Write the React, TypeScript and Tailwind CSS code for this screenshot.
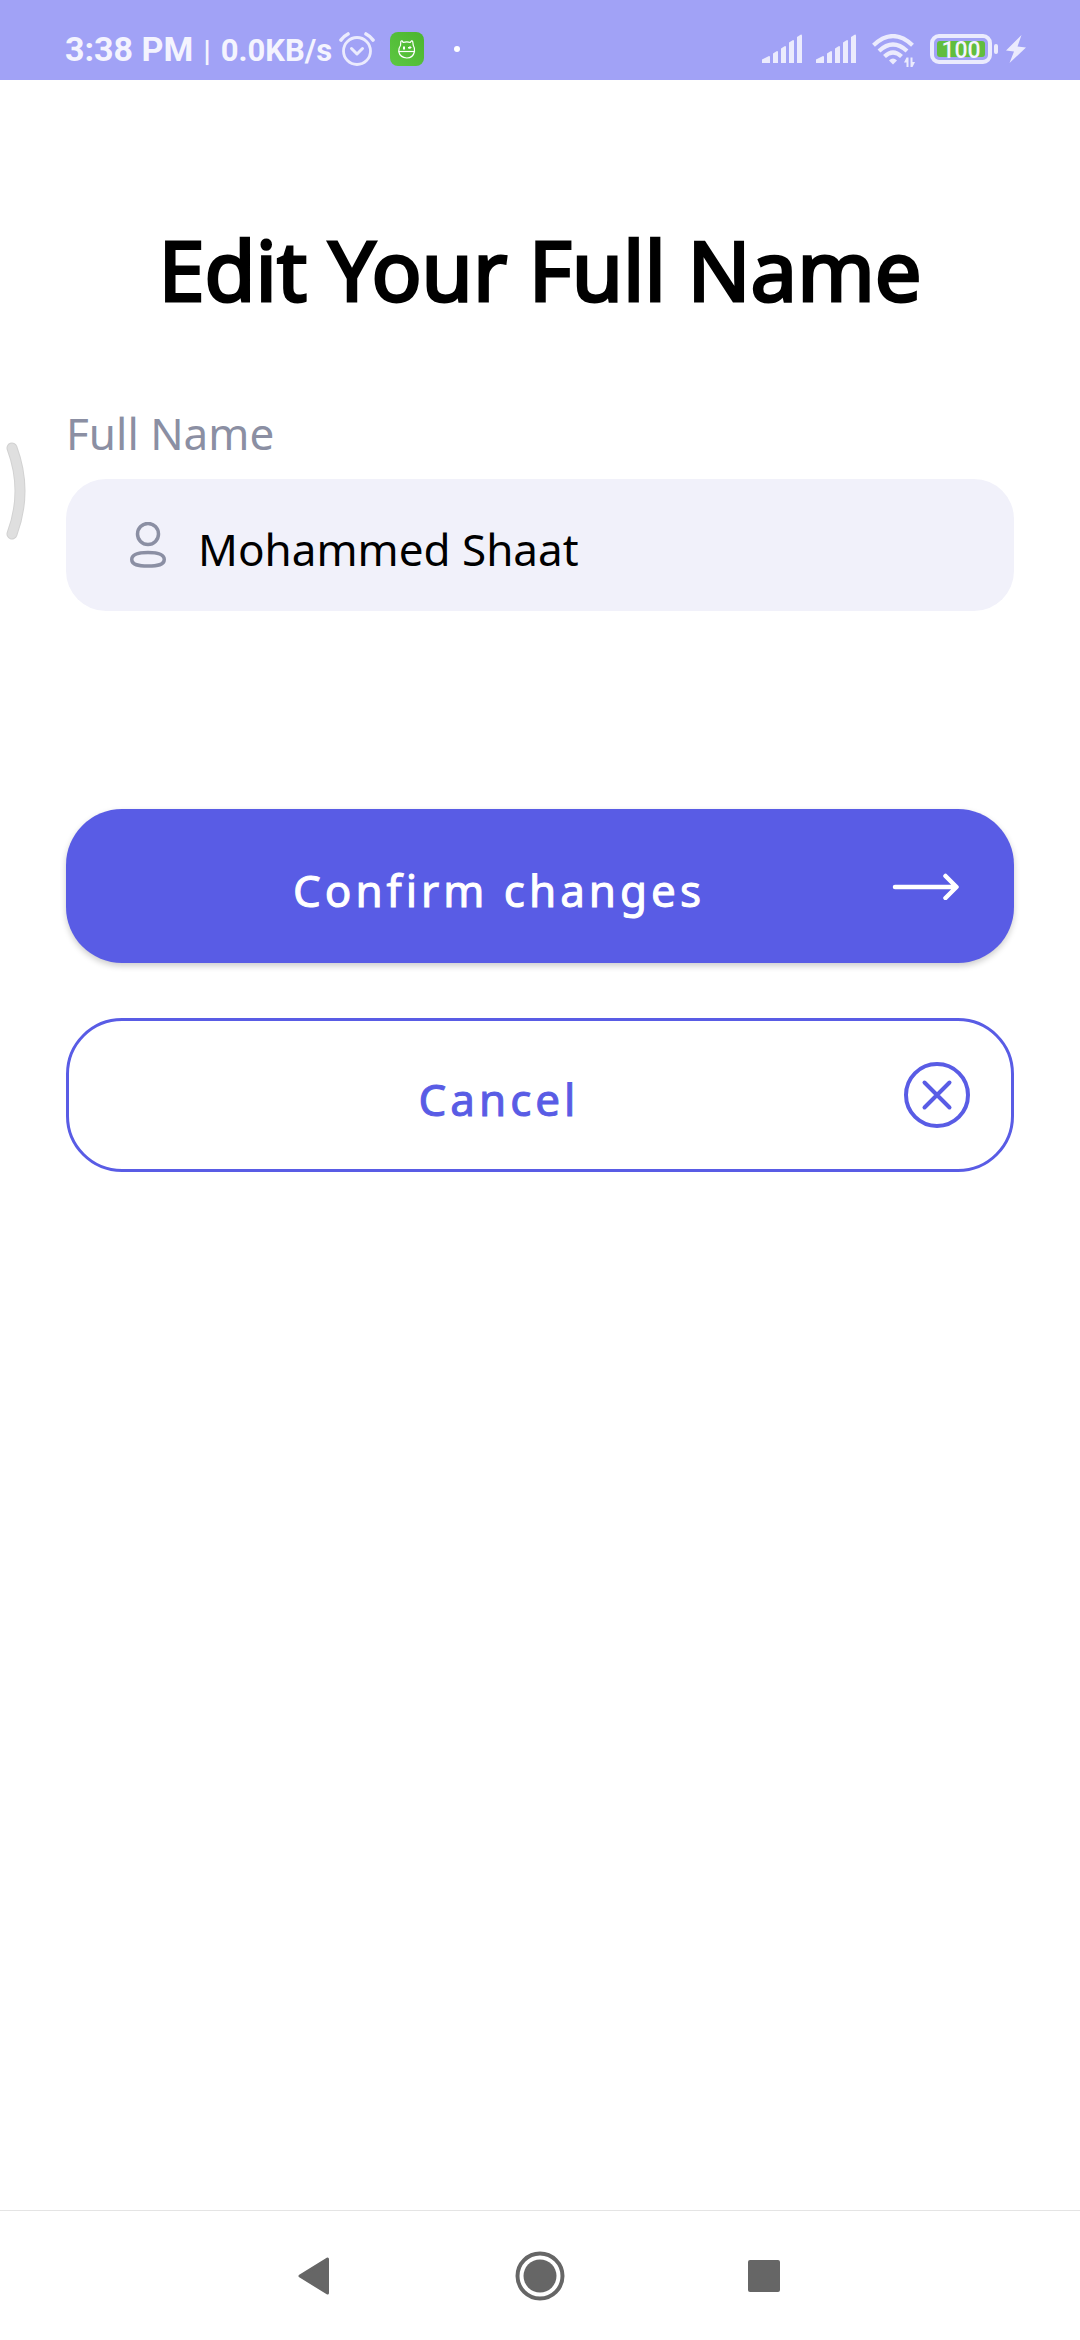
import { useState } from "react";

function SignalIcon() {
  return (
    <svg width="40" height="30" viewBox="0 0 40 30" fill="#ebebfd" aria-hidden="true">
      <path d="M0 25.5 7 22a1 1 0 0 1 1 1v6H0z" />
      <path d="M11 19.500l4-2.500a1 1 0 0 1 1 1v11h-5z" />
      <path d="M19 14.500l4-2.500a1 1 0 0 1 1 1v16h-5z" />
      <path d="M27 8.500l4-2.500a1 1 0 0 1 1 1v22h-5z" />
      <path d="M35 3l4-2.500a1 1 0 0 1 1 1V29h-5z" />
    </svg>
  );
}

function AlarmIcon() {
  return (
    <svg width="36" height="36" viewBox="0 0 36 36" fill="none" stroke="#ebebfd" strokeLinecap="round" aria-hidden="true">
      <circle cx="18" cy="20" r="13.500" strokeWidth="2.800" />
      <path d="M12.500 17.500l5.500 5.500 5.500-5.500" strokeWidth="3" strokeLinejoin="round" />
      <path d="M2 9A19 19 0 0 1 9 3M27 3A19 19 0 0 1 34 9" strokeWidth="3.600" />
    </svg>
  );
}

function MascotIcon() {
  return (
    <svg width="34" height="34" viewBox="0 0 34 34" aria-hidden="true">
      <defs>
        <linearGradient id="mascot" x1="1" y1="0" x2="0" y2="1">
          <stop offset="0" stopColor="#4cb52f" />
          <stop offset="1" stopColor="#5cc742" />
        </linearGradient>
      </defs>
      <rect width="34" height="34" rx="8" fill="url(#mascot)" />
      <g fill="none" stroke="#fff" strokeWidth="1.200" strokeLinejoin="round">
        <path d="M10.500 13.500 10.800 9.500Q12 7.800 13.200 10.500Q17 9.300 20.200 10.500Q21.800 7.800 22.700 9.500L23.300 13.500Q25 16 24.500 19.500Q23 26 16.800 26Q10 25.500 8.700 19.500Q8.500 16 10.500 13.500Z" />
        <path d="M9 19.500h15.500" />
      </g>
      <path d="M13 14.500h2v3h-2zM18 15h1.500v1.500H18zM19.500 14h1v3h-1zM20.500 15h1v1h-1z" fill="#fff" />
    </svg>
  );
}

function WifiIcon() {
  return (
    <svg width="43" height="34" viewBox="0 0 43 34" fill="none" stroke="#ebebfd" aria-hidden="true">
      <path d="M1.500 11.200Q21 -7 40.500 11.200" strokeWidth="4.200" />
      <path d="M7 17Q21 4 35 17" strokeWidth="4.200" />
      <path d="M12.500 22.500Q21 14.500 29.500 22.500" strokeWidth="4.200" />
      <path d="M21 30.500l-4-4Q21 22.500 25 26.500z" fill="#ebebfd" stroke="none" />
      <path d="M34.500 23.500h2V33h-2v-4.500h-2.500zM38.500 23.500h2V28h2.500L40.500 33h-2z" fill="#ebebfd" stroke="none" />
    </svg>
  );
}

function Battery() {
  return (
    <div className="flex items-center gap-[2px]">
      <div className="flex h-[30px] w-[62px] rounded-[9px] border-4 border-[#ebebfd] p-[3px]">
        <div className="flex flex-1 items-center justify-center rounded-[3px] bg-[#61bd3e] pt-[2px] text-[23px] leading-none font-medium text-[#f4f4fe]">
          100
        </div>
      </div>
      <div className="h-[10px] w-1 rounded-[2px] bg-[#ebebfd]" />
    </div>
  );
}

function StatusBar() {
  return (
    <header className="flex h-20 items-center justify-between bg-[#a1a2f6] pt-[18px] pr-[54px] pl-[65px] font-[Roboto,sans-serif] font-bold text-[#f4f4fe]">
      <div className="flex items-center">
        <div className="flex items-baseline pt-[2px]">
          <span className="text-[34px] leading-10">3:38 PM</span>
          <span className="mx-[10px] text-[30px] leading-10">|</span>
          <span className="text-[31px] leading-10">0.0KB/s</span>
        </div>
        <div className="ml-[7px] flex items-center">
          <AlarmIcon />
          <span className="ml-[15px]">
            <MascotIcon />
          </span>
          <span className="ml-[30px] h-[6px] w-[6px] rounded-full bg-white" />
        </div>
      </div>
      <div className="flex items-center">
        <SignalIcon />
        <span className="ml-[14px]">
          <SignalIcon />
        </span>
        <span className="ml-4 pt-1">
          <WifiIcon />
        </span>
        <span className="ml-[15px]">
          <Battery />
        </span>
        <svg className="ml-2" width="20" height="28" viewBox="0 0 20 28" fill="#ebebfd" aria-hidden="true">
          <path d="M15.500 0 0 15.500 8 16.500 3.500 28 20 12.500 11.500 11.500z" />
        </svg>
      </div>
    </header>
  );
}

function UserIcon() {
  return (
    <svg width="36" height="46" viewBox="0 0 36 46" fill="none" stroke="#8b8fa3" strokeWidth="3.500" aria-hidden="true">
      <circle cx="18" cy="12" r="10.500" />
      <path d="M1.750 37.500C1.750 32 8 30.500 18 30.500S34.250 32 34.250 37.500 28 44 18 44 1.750 43 1.750 37.500z" />
    </svg>
  );
}

function NavBar() {
  return (
    <nav className="flex h-[130px] items-center justify-center gap-[150px] border-t border-[#e4e4e4] text-[#666666]">
      <button type="button" aria-label="Back" className="flex w-[74px] justify-center pr-1">
        <svg width="32" height="38" viewBox="0 0 32 38" fill="currentColor" stroke="currentColor" strokeWidth="3" strokeLinejoin="round" aria-hidden="true">
          <path d="M2 19 29.500 2v34z" />
        </svg>
      </button>
      <button type="button" aria-label="Home" className="flex w-[74px] justify-center">
        <svg width="50" height="50" viewBox="0 0 50 50" aria-hidden="true">
          <circle cx="25" cy="25" r="22.500" fill="none" stroke="currentColor" strokeWidth="4" />
          <circle cx="25" cy="25" r="16.500" fill="currentColor" />
        </svg>
      </button>
      <button type="button" aria-label="Recent apps" className="flex w-[74px] justify-center">
        <span className="h-8 w-8 rounded-[2px] bg-current" />
      </button>
    </nav>
  );
}

export default function App() {
  const [name, setName] = useState("Mohammed Shaat");

  return (
    <div className="relative flex min-h-screen flex-col bg-white font-['Noto_Sans',sans-serif]">
      <StatusBar />

      <svg className="absolute top-[441px] left-[5px]" width="22" height="100" viewBox="0 0 22 100" fill="none" strokeLinecap="round" aria-hidden="true">
        <path d="M7 7Q23 50 7 93" stroke="#d2d2d2" strokeWidth="11" />
        <path d="M7 7Q23 50 7 93" stroke="#dfdfdf" strokeWidth="9" />
      </svg>

      <main className="flex flex-1 flex-col px-[66px]">
        <h1 className="mt-[129px] text-center text-[83px] leading-[120px] font-normal text-black [-webkit-text-stroke:3px_currentColor]">
          Edit Your Full Name
        </h1>

        <form className="mt-[70px] flex flex-col" onSubmit={(event) => event.preventDefault()}>
          <label htmlFor="full-name" className="text-[44px] leading-[68px] text-[#8b8fa3]">
            Full Name
          </label>
          <div className="mt-3 flex h-[132px] items-center gap-8 rounded-[40px] bg-[#f1f1fa] px-16">
            <UserIcon />
            <input
              id="full-name"
              type="text"
              value={name}
              onChange={(event) => setName(event.target.value)}
              className="h-full min-w-0 flex-1 bg-transparent pt-2 text-[44px] text-black outline-none"
            />
          </div>

          <button
            type="submit"
            className="mt-[198px] flex h-[154px] items-center rounded-[56px] bg-[#595ce5] pr-[54px] pl-10 text-white shadow-[0_3px_6px_rgba(0,0,0,0.2)]"
          >
            <span className="flex-1 pt-2 text-center text-[44px] leading-[60px] tracking-[4px] [-webkit-text-stroke:1px_currentColor]">
              Confirm changes
            </span>
            <svg width="68" height="28" viewBox="0 0 68 28" fill="none" stroke="currentColor" strokeWidth="4.500" strokeLinecap="round" strokeLinejoin="round" aria-hidden="true">
              <path d="M3 15h61M53.500 4 64.500 15 53.500 26" />
            </svg>
          </button>

          <button
            type="button"
            className="mt-[55px] flex h-[154px] items-center rounded-[56px] border-[3px] border-[#595ce5] pr-10 pl-[26px] text-[#595ce5]"
          >
            <span className="flex-1 pt-2 text-center text-[44px] leading-[60px] tracking-[4px] [-webkit-text-stroke:1px_currentColor]">
              Cancel
            </span>
            <svg width="68" height="68" viewBox="0 0 68 68" fill="none" stroke="currentColor" strokeWidth="4" strokeLinecap="round" aria-hidden="true">
              <circle cx="34" cy="34" r="31" />
              <path d="M21.500 21.500l25 25M46.500 21.500l-25 25" />
            </svg>
          </button>
        </form>
      </main>

      <NavBar />
    </div>
  );
}
